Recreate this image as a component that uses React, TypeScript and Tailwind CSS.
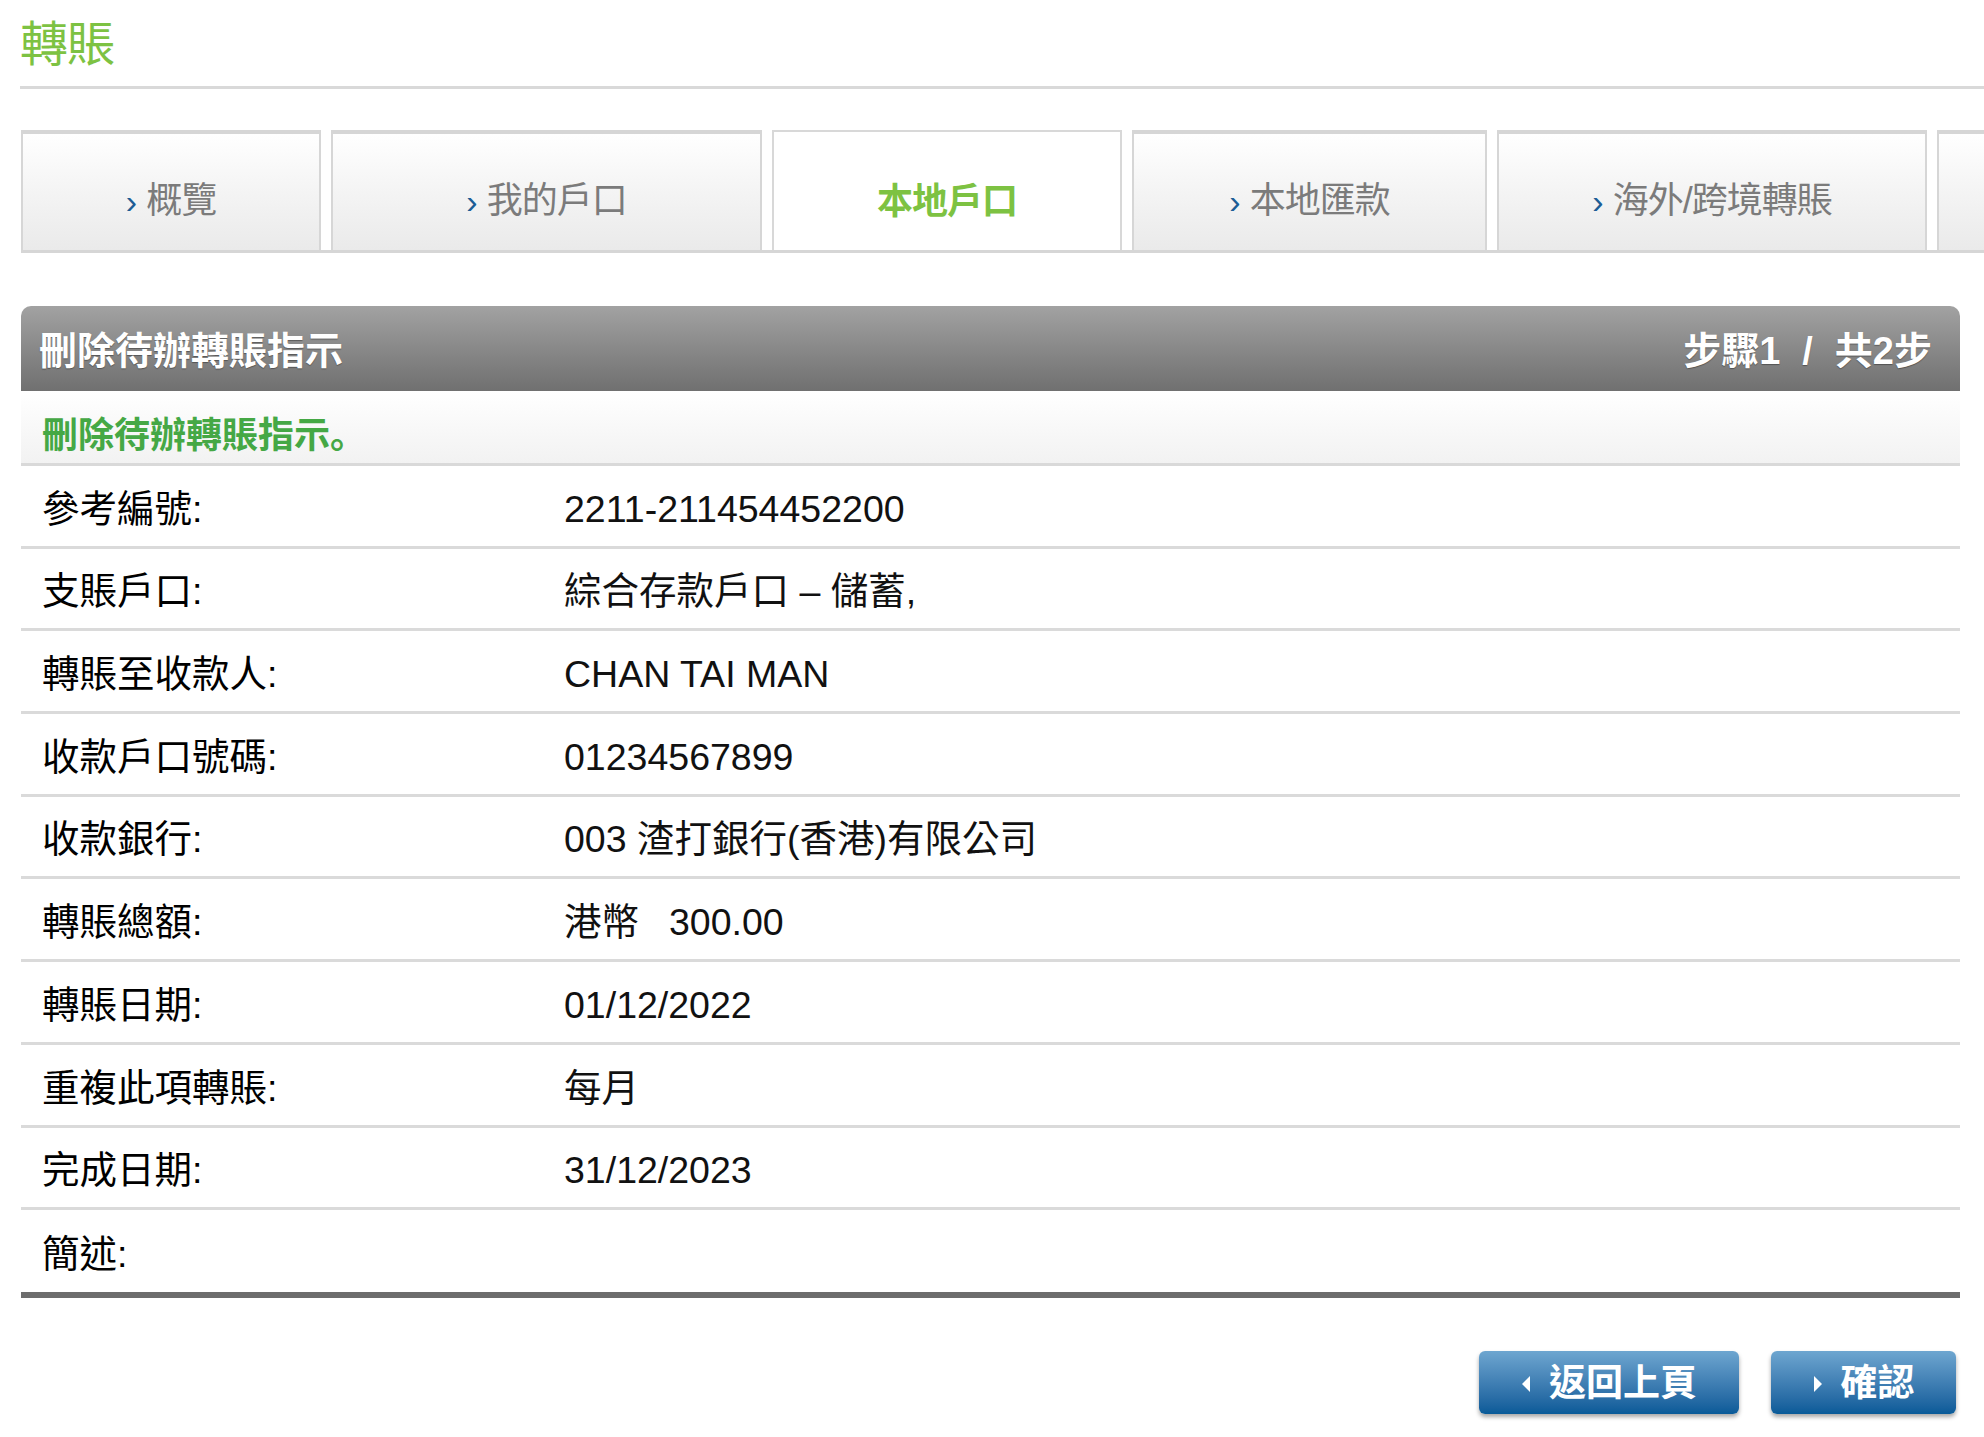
import React from "react";

const FONT = { fontFamily: '"Liberation Sans", Arial, "Noto Sans CJK TC", sans-serif' };

const tabs = [
  { label: "概覽", w: "w-[300px]" },
  { label: "我的戶口", w: "w-[431px]" },
  { label: "本地戶口", w: "w-[350px]", active: true },
  { label: "本地匯款", w: "w-[355px]" },
  { label: "海外/跨境轉賬", w: "w-[430px]" },
  { label: "", w: "w-[300px]" },
];

const rows: [string, React.ReactNode][] = [
  ["參考編號:", "2211-211454452200"],
  ["支賬戶口:", "綜合存款戶口 – 儲蓄,"],
  ["轉賬至收款人:", "CHAN TAI MAN"],
  ["收款戶口號碼:", "01234567899"],
  ["收款銀行:", "003 渣打銀行(香港)有限公司"],
  [
    "轉賬總額:",
    <>
      港幣<span className="ml-[30px]">300.00</span>
    </>,
  ],
  ["轉賬日期:", "01/12/2022"],
  ["重複此項轉賬:", "每月"],
  ["完成日期:", "31/12/2023"],
  ["簡述:", ""],
];

export default function App() {
  return (
    <div className="w-[1984px] h-[1437px] overflow-hidden bg-white" style={FONT}>
      {/* Title */}
      <div className="ml-[20px] h-[89px] border-b-[3px] border-[#d9d9d9] pt-[17px]">
        <div className="text-[48px] leading-[56px] text-[#7dc242] tracking-[-1px]">轉賬</div>
      </div>

      {/* Tabs */}
      <div className="ml-[21px] mt-[41px] flex gap-[10px] border-b-[3px] border-[#d6d6d6] overflow-hidden">
        {tabs.map((t, i) =>
          t.active ? (
            <div
              key={i}
              className={`${t.w} shrink-0 h-[123px] -mb-[3px] bg-white border-[2px] border-b-0 border-[#d8d8d8] flex items-center justify-center pt-[18px]`}
            >
              <span className="text-[36px] leading-[40px] text-[#7dc242] font-bold tracking-[-1px]">
                {t.label}
              </span>
            </div>
          ) : (
            <div
              key={i}
              className={`${t.w} shrink-0 h-[120px] border-[2px] border-b-0 border-t-[4px] border-[#d6d6d6] bg-gradient-to-b from-[#ffffff] via-[#f4f4f4] to-[#eaeaea] flex items-center justify-center pt-[18px]`}
            >
              {t.label && (
                <span className="flex items-center text-[36px] leading-[40px] text-[#7b7b7b] tracking-[-1px]">
                  <span className="text-[#1d5d95] text-[34px] mr-[10px]">›</span>
                  {t.label}
                </span>
              )}
            </div>
          )
        )}
      </div>

      {/* Panel */}
      <div className="ml-[21px] mr-[24px] mt-[53px]">
        <div className="h-[85px] rounded-t-[10px] bg-gradient-to-b from-[#a2a2a2] to-[#707070] flex items-center justify-between pl-[18px] pr-[28px] pt-[6px]">
          <span className="text-[38px] font-bold text-white tracking-[0px] [text-shadow:0_1px_1px_rgba(0,0,0,0.35)]">
            刪除待辦轉賬指示
          </span>
          <span className="flex items-center text-[38px] font-bold text-white [text-shadow:0_1px_1px_rgba(0,0,0,0.35)]">
            步驟1<span className="mx-[22px]">/</span>共2步
          </span>
        </div>
        <div className="h-[75px] bg-gradient-to-b from-[#ffffff] to-[#f2f2f2] border-b-[3px] border-[#d9d9d9] flex items-center pl-[21px] pt-[14px]">
          <span className="text-[36px] font-bold text-[#45a845] tracking-[0px]">
            刪除待辦轉賬指示
            <span style={{ fontFamily: '"Noto Sans CJK SC", sans-serif' }}>。</span>
          </span>
        </div>
        {rows.map(([label, value], i) => (
          <div
            key={i}
            className={`flex items-center pt-[6px] ${
              i < rows.length - 1
                ? "h-[82.7px] border-b-[3px] border-[#dadada]"
                : "h-[88px] border-b-[6px] border-[#6d6d6d]"
            }`}
          >
            <div className="w-[543px] shrink-0 pl-[21px] text-[37.5px] text-black tracking-[0px]">{label}</div>
            <div className="text-[37.5px] text-[#111] tracking-[0px]">{value}</div>
          </div>
        ))}
      </div>

      {/* Buttons */}
      <div className="mr-[28px] mt-[53px] flex justify-end gap-[32px]">
        <button className="w-[260px] h-[63px] rounded-[6px] bg-gradient-to-b from-[#6ea6d0] to-[#075a98] shadow-[0_3px_4px_rgba(0,0,0,0.35)] flex items-center justify-center gap-[18px] pt-[2px]">
          <svg width="10" height="18" viewBox="0 0 10 18">
            <polygon points="9,1 1,9 9,17" fill="white" />
          </svg>
          <span className="text-[37px] font-bold text-white tracking-[0px]">返回上頁</span>
        </button>
        <button className="w-[185px] h-[63px] rounded-[6px] bg-gradient-to-b from-[#6ea6d0] to-[#075a98] shadow-[0_3px_4px_rgba(0,0,0,0.35)] flex items-center justify-center gap-[18px] pt-[2px]">
          <svg width="10" height="18" viewBox="0 0 10 18">
            <polygon points="1,1 9,9 1,17" fill="white" />
          </svg>
          <span className="text-[37px] font-bold text-white tracking-[0px]">確認</span>
        </button>
      </div>
    </div>
  );
}
